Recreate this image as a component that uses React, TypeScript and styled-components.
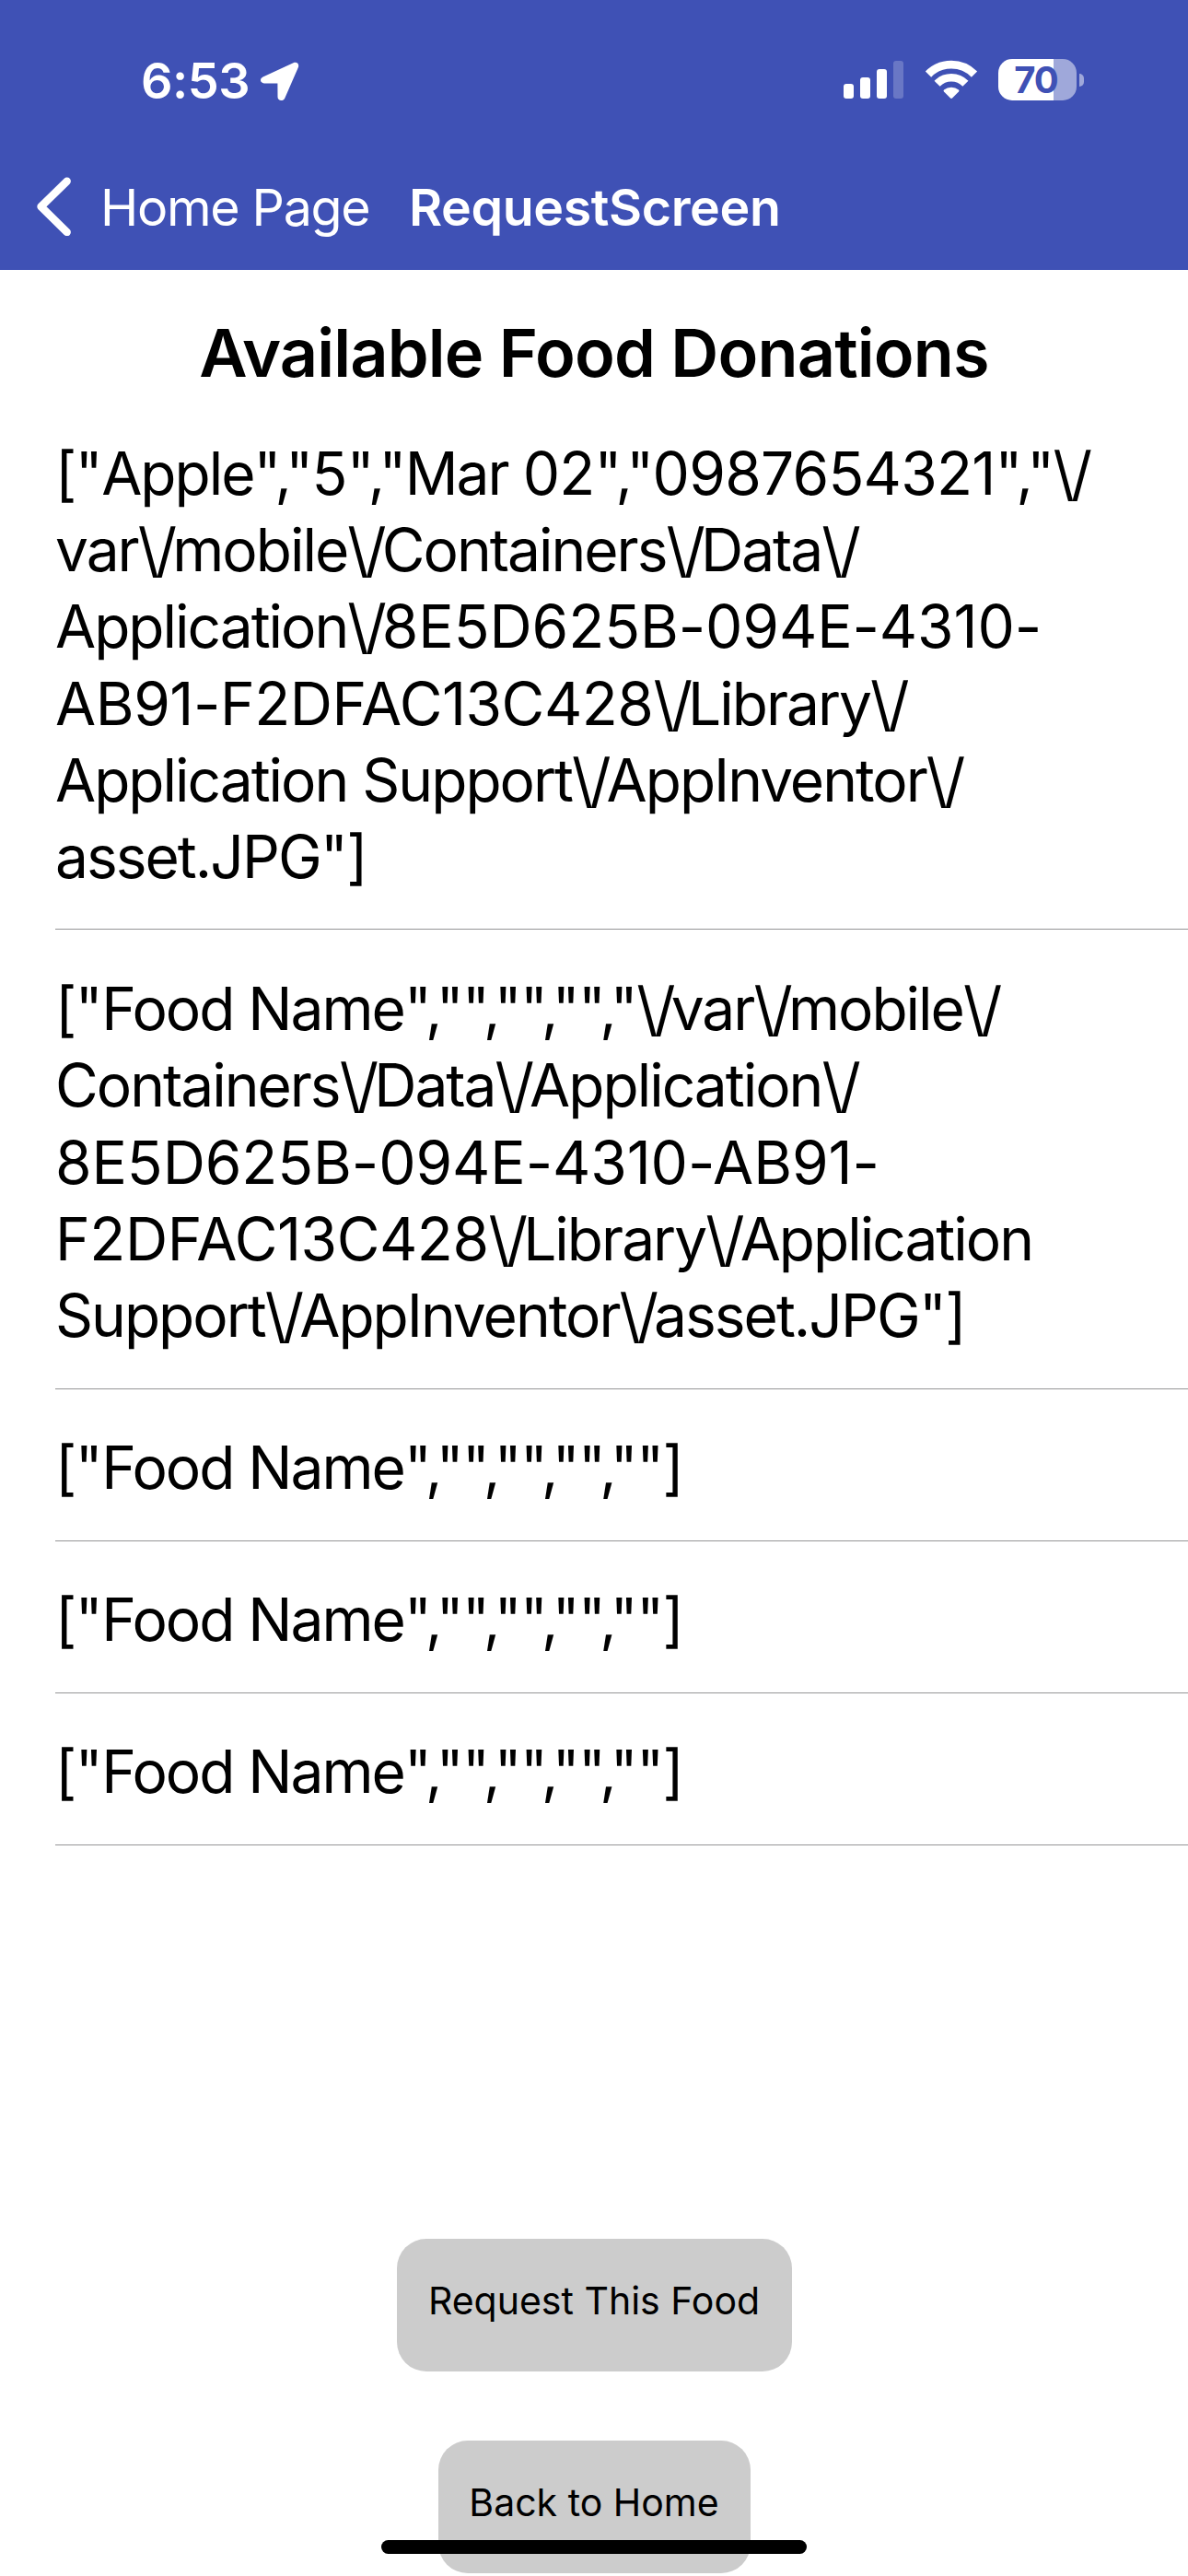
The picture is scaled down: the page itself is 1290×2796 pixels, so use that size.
import React from "react";
import styled, { createGlobalStyle } from "styled-components";

const GlobalStyle = createGlobalStyle`
  *, *::before, *::after { box-sizing: border-box; }
  html, body { margin: 0; padding: 0; background: #fff; }
  body { font-family: Inter, "Liberation Sans", sans-serif; color: #000; overflow: hidden; }
`;

const Screen = styled.div`
  position: relative;
  width: 1290px;
  height: 2796px;
  display: flex;
  flex-direction: column;
  background: #fff;
  overflow: hidden;
`;

const Header = styled.header`
  flex: none;
  height: 293px;
  display: flex;
  flex-direction: column;
  background: #3f51b5;
  color: #fff;
`;

const StatusBar = styled.div`
  flex: none;
  height: 176px;
  display: flex;
  align-items: flex-start;
  justify-content: space-between;
  padding: 56px 113px 0 153px;
`;

const StatusLeft = styled.div`
  display: flex;
  align-items: flex-start;
`;

const Clock = styled.span`
  width: 130px;
  font-size: 54px;
  line-height: 64px;
  font-weight: 600;
  letter-spacing: -0.5px;
`;

const ArrowIcon = styled.svg`
  display: block;
  margin-top: 11px;
`;

const StatusRight = styled.div`
  display: flex;
  align-items: flex-start;
  padding-top: 8px;
`;

const SignalIcon = styled.svg`
  display: block;
  margin-right: 22px;
`;

const WifiIcon = styled.svg`
  display: block;
  margin-right: 22px;
`;

const Battery = styled.div`
  width: 85px;
  height: 45px;
  border-radius: 15px;
  display: flex;
  align-items: center;
  justify-content: center;
  padding-right: 3px;
  background: linear-gradient(to right, #fff 60px, #9fa8da 60px);
  color: #3f51b5;
  font-size: 40px;
  font-weight: 700;
  line-height: 45px;
  letter-spacing: -1px;
`;

const BatteryNub = styled.div`
  width: 5px;
  height: 14px;
  margin: 16px 0 0 3px;
  border-radius: 0 5px 5px 0;
  background: #9fa8da;
`;

const NavBar = styled.nav`
  display: flex;
  align-items: flex-start;
  padding: 16px 0 0 40px;
`;

const NavText = styled.span<{ $weight: number; $width: number; $spacing: number }>`
  width: ${(p) => p.$width}px;
  margin-top: 1px;
  font-size: 55.5px;
  line-height: 64px;
  font-weight: ${(p) => p.$weight};
  letter-spacing: ${(p) => p.$spacing}px;
  white-space: nowrap;
`;

const BackIcon = styled.svg`
  display: block;
  margin-right: 31px;
`;

const Title = styled.h1`
  flex: none;
  margin: 0;
  height: 135px;
  padding-top: 46px;
  font-size: 72px;
  line-height: 88px;
  font-weight: 630;
  letter-spacing: -0.85px;
  text-align: center;
  white-space: nowrap;
`;

const List = styled.ul`
  flex: 1;
  margin: 0;
  padding: 0 0 0 60px;
  list-style: none;
`;

const Row = styled.li`
  padding: 43.7px 0 37px;
  border-bottom: 1px solid #949496;
`;

const Line = styled.span`
  display: block;
  font-size: 64px;
  line-height: 83.3px;
  white-space: nowrap;
`;

const Run = styled.span<{ $spacing: number }>`
  letter-spacing: ${(p) => p.$spacing}px;
`;

const Actions = styled.footer`
  flex: none;
  display: flex;
  flex-direction: column;
  align-items: center;
  gap: 75px;
  padding-bottom: 3px;
`;

const ActionButton = styled.button<{ $width: number }>`
  width: ${(p) => p.$width}px;
  height: 144px;
  padding: 0 0 11px;
  border: 0;
  border-radius: 32px;
  background: #ccc;
  color: #000;
  font-family: inherit;
  font-size: 41px;
  line-height: 50px;
  white-space: nowrap;
`;

const HomeIndicator = styled.div`
  position: absolute;
  left: 414px;
  bottom: 24px;
  width: 462px;
  height: 15px;
  border-radius: 8px;
  background: #000;
`;

const emptyEntry = ['["Food Name","","","",""]'];

const entries: string[][] = [
  [
    '["Apple","5","Mar 02","0987654321","\\/',
    "var\\/mobile\\/Containers\\/Data\\/",
    "Application\\/8E5D625B-094E-4310-",
    "AB91-F2DFAC13C428\\/Library\\/",
    "Application Support\\/AppInventor\\/",
    'asset.JPG"]',
  ],
  [
    '["Food Name","","","","\\/var\\/mobile\\/',
    "Containers\\/Data\\/Application\\/",
    "8E5D625B-094E-4310-AB91-",
    "F2DFAC13C428\\/Library\\/Application",
    'Support\\/AppInventor\\/asset.JPG"]',
  ],
  emptyEntry,
  emptyEntry,
  emptyEntry,
];

// Splits a line into slash pairs, codes, words and punctuation, each tracked on its own.
const RUNS = /\\\/|[A-Z0-9]+(?![a-z])[A-Z0-9-]*|[A-Z]?[a-z .]+|[^A-Za-z0-9\\]+/g;

function tracking(run: string): number {
  if (run.startsWith("\\")) return -4.9;
  if (/[a-z]/.test(run)) return -2;
  if (/^[0-9]+$/.test(run)) return -0.75;
  if (/^[A-Z]+$/.test(run)) return -1.8;
  if (/^[A-Z0-9-]+$/.test(run)) return run.endsWith("-") ? -0.1 : -0.45;
  return -1.5;
}

function TrackedLine({ text }: { text: string }) {
  const runs = text.match(RUNS) ?? [];
  return (
    <Line>
      {runs.map((run, i) => (
        <Run key={i} $spacing={tracking(run)}>
          {run}
        </Run>
      ))}
    </Line>
  );
}

export default function App() {
  return (
    <>
      <GlobalStyle />
      <Screen>
        <Header>
          <StatusBar>
            <StatusLeft>
              <Clock>6:53</Clock>
              <ArrowIcon width="42" height="43" viewBox="0 0 42 43">
                <path
                  d="M2.5 16.5 L35.5 1.3 C39.5 -0.3 42.3 2.5 40.8 6.3 L26.3 39.5 C24.5 43.4 18.6 42.8 18.5 38.3 L18.4 23.6 L3.8 23.4 C-0.6 23.2 -1.4 18.4 2.5 16.5 Z"
                  fill="#fff"
                />
              </ArrowIcon>
            </StatusLeft>
            <StatusRight>
              <SignalIcon width="66" height="44" viewBox="0 0 66 44">
                <rect x="0" y="27" width="11" height="16" rx="3" fill="#fff" />
                <rect x="18" y="20" width="11" height="23" rx="3" fill="#fff" />
                <rect x="36" y="11" width="11" height="32" rx="3" fill="#fff" />
                <rect x="54" y="2" width="11" height="41" rx="3" fill="#fff" opacity="0.22" />
              </SignalIcon>
              <WifiIcon width="58" height="44" viewBox="0 0 58 44">
                <path d="M4 16.6 A35 35 0 0 1 54 16.6" fill="none" stroke="#fff" strokeWidth="8.8" />
                <path d="M13.6 26.8 A21.5 21.5 0 0 1 44.4 26.8" fill="none" stroke="#fff" strokeWidth="8.6" />
                <path
                  d="M21 33.6 A12.5 12.5 0 0 1 37 33.6 Q38 34.6 37 35.6 L30 42.6 Q29 43.5 28 42.6 L21 35.6 Q20 34.6 21 33.6 Z"
                  fill="#fff"
                />
              </WifiIcon>
              <Battery>70</Battery>
              <BatteryNub />
            </StatusRight>
          </StatusBar>
          <NavBar>
            <BackIcon width="38" height="64" viewBox="0 0 38 64">
              <path
                d="M32.7 4.7 L4.5 32.3 L32.7 60"
                fill="none"
                stroke="#fff"
                strokeWidth="8.4"
                strokeLinecap="round"
                strokeLinejoin="round"
              />
            </BackIcon>
            <NavText $weight={400} $width={335} $spacing={-1.3}>
              Home Page
            </NavText>
            <NavText $weight={600} $width={420} $spacing={-0.4}>
              RequestScreen
            </NavText>
          </NavBar>
        </Header>
        <Title>Available Food Donations</Title>
        <List>
          {entries.map((lines, i) => (
            <Row key={i}>
              {lines.map((line, j) => (
                <TrackedLine key={j} text={line} />
              ))}
            </Row>
          ))}
        </List>
        <Actions>
          <ActionButton $width={429}>Request This Food</ActionButton>
          <ActionButton $width={339}>Back to Home</ActionButton>
        </Actions>
        <HomeIndicator />
      </Screen>
    </>
  );
}
